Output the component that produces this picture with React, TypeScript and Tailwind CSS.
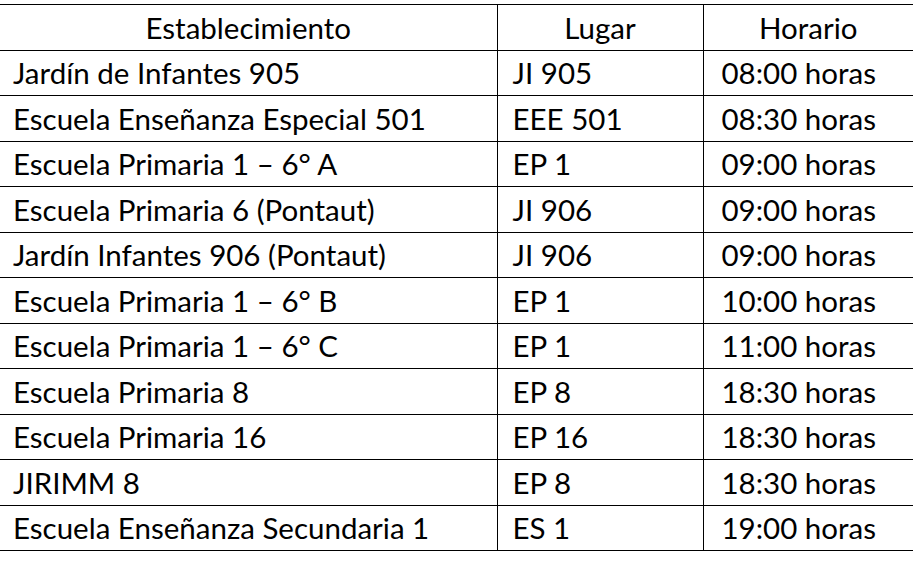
const rows: [string, string, string][] = [
  ['Jardín de Infantes 905', 'JI 905', '08:00 horas'],
  ['Escuela Enseñanza Especial 501', 'EEE 501', '08:30 horas'],
  ['Escuela Primaria 1 – 6° A', 'EP 1', '09:00 horas'],
  ['Escuela Primaria 6 (Pontaut)', 'JI 906', '09:00 horas'],
  ['Jardín Infantes 906 (Pontaut)', 'JI 906', '09:00 horas'],
  ['Escuela Primaria 1 – 6° B', 'EP 1', '10:00 horas'],
  ['Escuela Primaria 1 – 6° C', 'EP 1', '11:00 horas'],
  ['Escuela Primaria 8', 'EP 8', '18:30 horas'],
  ['Escuela Primaria 16', 'EP 16', '18:30 horas'],
  ['JIRIMM 8', 'EP 8', '18:30 horas'],
  ['Escuela Enseñanza Secundaria 1', 'ES 1', '19:00 horas'],
]

export default function App() {
  return (
    <div className="w-[913px] h-[563px] bg-white pt-[4px] text-black text-[29.5px] leading-none font-['Lato',sans-serif]">
      <table className="w-full border-collapse table-fixed">
        <colgroup>
          <col className="w-[497px]" />
          <col className="w-[206px]" />
          <col />
        </colgroup>
        <thead>
          <tr className="h-[45.5px] border-y border-black">
            <th className="font-normal text-center">Establecimiento</th>
            <th className="font-normal text-center border-l border-black">Lugar</th>
            <th className="font-normal text-center border-l border-black">Horario</th>
          </tr>
        </thead>
        <tbody>
          {rows.map(([name, place, time], i) => (
            <tr key={i} className="h-[45.5px] border-b border-black">
              <td className="pl-[13px]">{name}</td>
              <td className="pl-[15px] border-l border-black">{place}</td>
              <td className="pl-[18px] border-l border-black">{time}</td>
            </tr>
          ))}
        </tbody>
      </table>
    </div>
  )
}
